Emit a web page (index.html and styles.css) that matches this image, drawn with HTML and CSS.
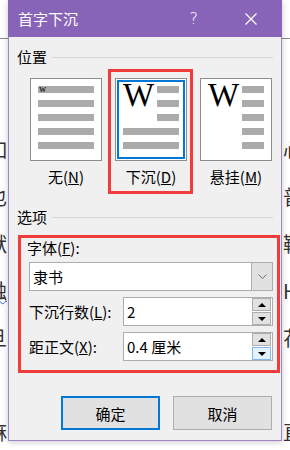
FILE: index.html
```html
<!DOCTYPE html>
<html lang="zh-CN">
<head>
<meta charset="utf-8">
<title>首字下沉</title>
<link rel="stylesheet" href="styles.css">
</head>
<body>
<div class="doc">
  <div class="doc-top"></div>
  <div class="doc-lines">
    <div class="doc-line"><span>如</span><span>心</span></div>
    <div class="doc-line"><span>也</span><span>普</span></div>
    <div class="doc-line"><span>洑</span><span>鞋</span></div>
    <div class="doc-line"><span class="wavy">触</span><span>H</span></div>
    <div class="doc-line"><span>旦</span><span>花</span></div>
    <div class="doc-line"><span></span><span></span></div>
    <div class="doc-line"><span>麻</span><span>直</span></div>
  </div>
</div>

<div class="dialog">
  <div class="titlebar">
    <span class="title">首字下沉</span>
    <span class="help">?</span>
    <span class="close"><svg width="12" height="12" viewBox="0 0 12 12"><path d="M0.5 0.5 L11.5 11.5 M11.5 0.5 L0.5 11.5" stroke="#fff" stroke-width="1.3" fill="none"/></svg></span>
  </div>
  <div class="body">
    <div class="group-head"><span>位置</span><i class="rule"></i></div>
    <div class="thumbs">
      <div class="thumb-item">
        <div class="thumb">
          <div class="bar full"><span class="sw">w</span></div>
          <div class="bar full"></div>
          <div class="bar full"></div>
          <div class="bar full"></div>
          <div class="bar full"></div>
        </div>
        <div class="thumb-label">无(<u>N</u>)</div>
      </div>
      <div class="thumb-item sel">
        <div class="thumb active">
          <div class="bigw w3">W</div>
          <div class="bar short"></div>
          <div class="bar short"></div>
          <div class="bar short"></div>
          <div class="bar full"></div>
          <div class="bar full"></div>
        </div>
        <div class="thumb-label">下沉(<u>D</u>)</div>
      </div>
      <div class="thumb-item">
        <div class="thumb">
          <div class="bigw w5">W</div>
          <div class="bar short"></div>
          <div class="bar short"></div>
          <div class="bar short"></div>
          <div class="bar short"></div>
          <div class="bar short"></div>
        </div>
        <div class="thumb-label">悬挂(<u>M</u>)</div>
      </div>
    </div>

    <div class="group-head head2"><span>选项</span><i class="rule"></i></div>
    <div class="options">
      <div class="lbl top">字体(<u>F</u>):</div>
      <div class="combo">
        <span class="val">隶书</span>
        <span class="drop"><svg width="9" height="5" viewBox="0 0 9 5"><path d="M0.5 0.5 L4.5 4.5 L8.5 0.5" stroke="#707070" stroke-width="1" fill="none"/></svg></span>
      </div>
      <div class="row">
        <span class="lbl">下沉行数(<u>L</u>):</span>
        <div class="spin">
          <span class="val">2</span>
          <span class="spin-btns"><span class="sb"><i class="up"></i></span><span class="sb"><i class="down"></i></span></span>
        </div>
      </div>
      <div class="row">
        <span class="lbl">距正文(<u>X</u>):</span>
        <div class="spin">
          <span class="val">0.4 厘米</span>
          <span class="spin-btns"><span class="sb"><i class="up"></i></span><span class="sb hot"><i class="down"></i></span></span>
        </div>
      </div>
    </div>

    <div class="buttons">
      <button class="btn primary">确定</button>
      <button class="btn">取消</button>
    </div>
  </div>
</div>
</body>
</html>
```

FILE: styles.css
```css
html, body {
  margin: 0;
  padding: 0;
}
body {
  width: 290px;
  height: 450px;
  overflow: hidden;
  position: relative;
  background: #ffffff;
  font-family: "Noto Sans CJK SC", "Noto Sans", sans-serif;
}

/* document behind the dialog */
.doc-top {
  height: 38px;
  border-bottom: 1px solid #8a8a8a;
}
.doc-lines {
  padding-top: 87px;
}
.doc-line {
  height: 47px;
  line-height: 47px;
  font-size: 20px;
  color: #333333;
  display: flex;
  justify-content: space-between;
  margin: 0 -13px;
}
.doc-line span {
  width: 20px;
}
.wavy {
  text-decoration: underline wavy #3355ee;
  text-decoration-thickness: 1px;
}

/* dialog */
.dialog {
  position: absolute;
  left: 8px;
  top: 0;
  width: 274px;
  height: 441px;
  box-sizing: border-box;
  border: 1px solid #a084cc;
  border-top: none;
  background: #f0f0f0;
  box-shadow: 0 1px 6px rgba(0, 0, 0, 0.22);
}
.titlebar {
  height: 37px;
  margin: 0 -1px;
  background: #8764b8;
  color: #ffffff;
  display: flex;
  align-items: center;
  padding-left: 10px;
  font-size: 15px;
}
.title {
  flex: 1;
}
.help {
  font-size: 16px;
  font-family: "DejaVu Sans", sans-serif;
  font-weight: 300;
  margin-right: 47px;
}
.close {
  display: flex;
  margin-right: 25px;
}

.body {
  padding: 0 8px;
}
.group-head {
  display: flex;
  align-items: center;
  height: 20px;
  line-height: 20px;
  margin-top: 10px;
  font-size: 15px;
  color: #000;
}
.rule {
  flex: 1;
  height: 1px;
  background: #d8d8d8;
  margin-left: 5px;
}
.head2 {
  margin-top: 20px;
}

/* thumbnails */
.thumbs {
  display: flex;
  gap: 13px;
  margin-top: 11px;
  padding-left: 13px;
}
.thumb-item {
  position: relative;
  width: 72px;
  display: flex;
  flex-direction: column;
  align-items: center;
}
.thumb-item.sel::after {
  content: "";
  position: absolute;
  left: -7px;
  right: -6px;
  top: -9px;
  bottom: -7px;
  border: 3px solid #f03c3c;
}
.thumb {
  width: 72px;
  height: 83px;
  box-sizing: border-box;
  border: 1px solid #8e8e8e;
  background: #ffffff;
  padding: 7px;
  display: grid;
  grid-template-columns: 1fr 22px;
  grid-auto-rows: 7px;
  row-gap: 7px;
  align-content: start;
}
.thumb.active {
  box-shadow: inset 0 0 0 1px #ffffff, inset 0 0 0 3px #0078d7;
}
.bar {
  height: 7px;
  background: #ababab;
}
.bar.full {
  grid-column: 1 / 3;
}
.bar.short {
  grid-column: 2;
}
.sw {
  display: block;
  font-family: "Liberation Serif", serif;
  font-size: 10px;
  line-height: 6px;
  color: #000;
  padding-left: 1px;
}
.bigw {
  grid-column: 1;
  align-self: start;
  font-family: "Liberation Serif", serif;
  font-size: 33px;
  line-height: 33px;
  margin-top: -7px;
  color: #000;
}
.bigw.w3 {
  grid-row: 1 / span 3;
}
.bigw.w5 {
  grid-row: 1 / span 5;
}
.thumb-label {
  margin-top: 6px;
  font-size: 15px;
  line-height: 20px;
  white-space: nowrap;
  color: #000;
}

/* options */
.options {
  margin-top: 8px;
  margin-left: 1px;
  width: 262px;
  box-sizing: border-box;
  border: 3px solid #f03c3c;
  padding: 0 4px 9px 6px;
  font-size: 15px;
  color: #000;
}
.lbl.top {
  height: 20px;
  line-height: 20px;
}
.combo {
  margin-top: 4px;
  margin-left: 2px;
  height: 29px;
  box-sizing: border-box;
  border: 1px solid #adadad;
  background: #ffffff;
  display: flex;
  align-items: center;
}
.val {
  flex: 1;
  padding-left: 3px;
  line-height: 20px;
}
.drop {
  width: 20px;
  align-self: stretch;
  background: #e1e1e1;
  border-left: 1px solid #adadad;
  display: flex;
  align-items: center;
  justify-content: center;
}
.row {
  margin-top: 6px;
  margin-left: 2px;
  height: 29px;
  display: flex;
  align-items: center;
}
.row .lbl {
  width: 94px;
  white-space: nowrap;
}
.spin {
  width: 150px;
  height: 29px;
  box-sizing: border-box;
  border: 1px solid #adadad;
  background: #ffffff;
  display: flex;
  align-items: center;
}
.spin-btns {
  display: flex;
  flex-direction: column;
  gap: 1px;
  width: 19px;
  margin-right: 1px;
}
.sb {
  height: 13px;
  box-sizing: border-box;
  border: 1px solid #adadad;
  background: #e1e1e1;
  display: flex;
  align-items: center;
  justify-content: center;
}
.sb.hot {
  background: #e5f1fb;
  border-color: #7fb6ec;
}
.up {
  width: 0;
  height: 0;
  border-left: 4px solid transparent;
  border-right: 4px solid transparent;
  border-bottom: 4px solid #000;
}
.down {
  width: 0;
  height: 0;
  border-left: 4px solid transparent;
  border-right: 4px solid transparent;
  border-top: 4px solid #000;
}

/* buttons */
.buttons {
  margin-top: 23px;
  display: flex;
  justify-content: flex-end;
  gap: 13px;
  padding-right: 1px;
}
.btn {
  width: 99px;
  height: 34px;
  box-sizing: border-box;
  border: 1px solid #adadad;
  background: #e1e1e1;
  font-family: inherit;
  font-size: 15px;
  color: #000;
  padding: 0;
}
.btn.primary {
  border: 2px solid #0078d7;
}
```
